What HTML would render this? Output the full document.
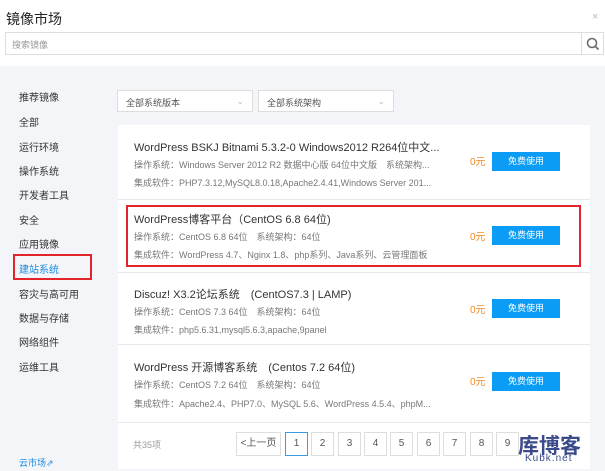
<!DOCTYPE html><html><head><meta charset="utf-8"><style>
*{margin:0;padding:0;box-sizing:border-box}
body{width:605px;height:471px;overflow:hidden;background:#f3f5f8;font-family:"Liberation Sans","Noto Sans CJK SC",sans-serif;position:relative;color:#333}
.a{position:absolute;white-space:nowrap}
.hd{position:absolute;left:0;top:0;width:605px;height:66px;background:#fff}
.side{font-size:10px;color:#333;left:19px}
.card{position:absolute;left:118px;width:472px;background:#fff;border-bottom:1px solid #e6e8ec}
.t{font-size:11px;color:#333;left:16px}
.s{font-size:9px;color:#777;left:16px}
.p{font-size:10px;color:#f08a24;left:352px}
.b{left:374px;width:68px;height:19px;background:#0b9cf5;color:#fff;font-size:9px;text-align:center;line-height:19px}
.pg{top:432px;height:24px;width:23px;border:1px solid #ddd;background:#fff;font-size:10px;text-align:center;line-height:22px;color:#555}
</style></head><body>
<div class="hd"></div>
<div class="a" style="left:6px;top:9px;font-size:14px;color:#222">镜像市场</div>
<div class="a" style="left:592px;top:11px;font-size:11px;color:#bbb">×</div>
<div class="a" style="left:5px;top:32px;width:599px;height:23px;border:1px solid #ddd;background:#fff"></div>
<div class="a" style="left:12px;top:38px;font-size:9px;color:#999">搜索镜像</div>
<div class="a" style="left:581px;top:32px;width:1px;height:23px;background:#ddd"></div>
<svg class="a" style="left:586px;top:37px" width="14" height="14"><circle cx="6" cy="6" r="4.5" fill="none" stroke="#666" stroke-width="1.5"/><line x1="9.3" y1="9.3" x2="12.5" y2="12.5" stroke="#666" stroke-width="1.6"/></svg>
<div class="a side" style="top:89px">推荐镜像</div>
<div class="a side" style="top:114px">全部</div>
<div class="a side" style="top:139px">运行环境</div>
<div class="a side" style="top:163px">操作系统</div>
<div class="a side" style="top:187px">开发者工具</div>
<div class="a side" style="top:212px">安全</div>
<div class="a side" style="top:236px">应用镜像</div>
<div class="a" style="left:13px;top:254px;width:79px;height:26px;border:2px solid #e3242b"></div>
<div class="a side" style="top:261px;color:#1a8be0">建站系统</div>
<div class="a side" style="top:286px">容灾与高可用</div>
<div class="a side" style="top:310px">数据与存储</div>
<div class="a side" style="top:334px">网络组件</div>
<div class="a side" style="top:359px">运维工具</div>
<div class="a" style="left:19px;top:456px;font-size:9px;color:#1a8be0">云市场⇗</div>
<div class="a" style="left:117px;top:90px;width:136px;height:22px;border:1px solid #ddd;background:#fff;font-size:9px;color:#555;padding:5px 8px">全部系统版本<span style="position:absolute;right:8px;color:#bbb">⌄</span></div>
<div class="a" style="left:258px;top:90px;width:136px;height:22px;border:1px solid #ddd;background:#fff;font-size:9px;color:#555;padding:5px 8px">全部系统架构<span style="position:absolute;right:8px;color:#bbb">⌄</span></div>
<div class="card" style="top:125px;height:75px">
<div class="a t" style="top:14px">WordPress BSKJ Bitnami 5.3.2-0 Windows2012 R264位中文...</div>
<div class="a s" style="top:33px">操作系统：Windows Server 2012 R2 数据中心版 64位中文版　系统架构...</div>
<div class="a s" style="top:51px">集成软件：PHP7.3.12,MySQL8.0.18,Apache2.4.41,Windows Server 201...</div>
<div class="a p" style="top:28px">0元</div><div class="a b" style="top:27px">免费使用</div></div>
<div class="card" style="top:200px;height:73px">
<div class="a t" style="top:11px">WordPress博客平台（CentOS 6.8 64位)</div>
<div class="a s" style="top:30px">操作系统：CentOS 6.8 64位　系统架构：64位</div>
<div class="a s" style="top:48px">集成软件：WordPress 4.7、Nginx 1.8、php系列、Java系列、云管理面板</div>
<div class="a p" style="top:28px">0元</div><div class="a b" style="top:26px">免费使用</div></div>
<div class="a" style="left:126px;top:205px;width:455px;height:62px;border:2px solid #e3242b"></div>
<div class="card" style="top:273px;height:72px">
<div class="a t" style="top:13px">Discuz! X3.2论坛系统　(CentOS7.3 | LAMP)</div>
<div class="a s" style="top:32px">操作系统：CentOS 7.3 64位　系统架构：64位</div>
<div class="a s" style="top:50px">集成软件：php5.6.31,mysql5.6.3,apache,9panel</div>
<div class="a p" style="top:28px">0元</div><div class="a b" style="top:26px">免费使用</div></div>
<div class="card" style="top:345px;height:78px">
<div class="a t" style="top:14px">WordPress 开源博客系统　(Centos 7.2 64位)</div>
<div class="a s" style="top:33px">操作系统：CentOS 7.2 64位　系统架构：64位</div>
<div class="a s" style="top:52px">集成软件：Apache2.4、PHP7.0、MySQL 5.6、WordPress 4.5.4、phpM...</div>
<div class="a p" style="top:28px">0元</div><div class="a b" style="top:27px">免费使用</div></div>
<div class="card" style="top:423px;height:46px;border:none"></div>
<div class="a" style="left:133px;top:438px;font-size:9px;color:#999">共35项</div>
<div class="a pg" style="left:236px;width:45px">&lt;上一页</div>
<div class="a pg" style="left:285px;border-color:#3b9be0">1</div>
<div class="a pg" style="left:311px">2</div>
<div class="a pg" style="left:338px">3</div>
<div class="a pg" style="left:364px">4</div>
<div class="a pg" style="left:390px">5</div>
<div class="a pg" style="left:417px">6</div>
<div class="a pg" style="left:443px">7</div>
<div class="a pg" style="left:470px">8</div>
<div class="a pg" style="left:496px">9</div>
<div class="a" style="left:518px;top:430px;font-size:21px;font-weight:bold;color:#3a4a8a">库博客</div>
<div class="a" style="left:525px;top:453px;font-size:10px;color:#3a4a8a;letter-spacing:1px">Kubk.net</div>
</body></html>
